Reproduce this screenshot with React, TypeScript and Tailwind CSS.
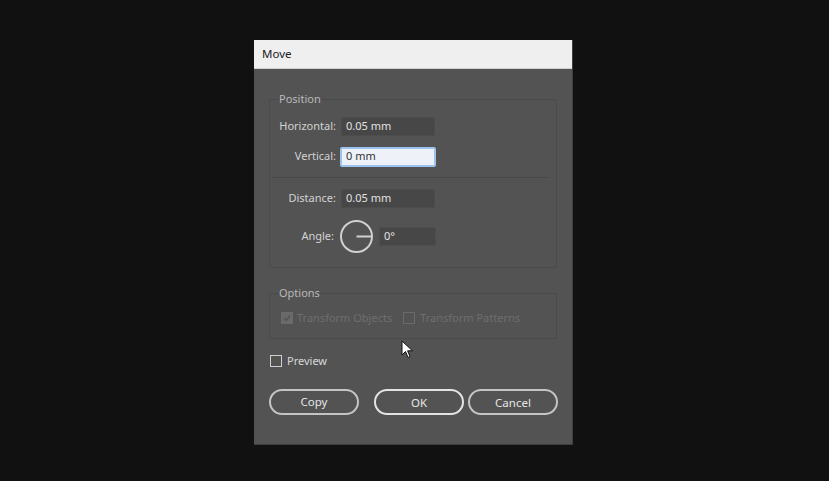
import React from "react";

const font = { fontFamily: '"Noto Sans", "Open Sans", Arial, sans-serif' };

const Field: React.FC<{ label: string; value: string; focused?: boolean }> = ({
  label,
  value,
  focused,
}) => (
  <div className="flex items-center h-[19px]">
    <span className="w-[68px] text-right text-[11px] text-[#d2d2d2] pr-[2px]">{label}</span>
    {focused ? (
      <div className="ml-[2px] w-[96px] h-[20px] bg-[#eef2f8] border-2 border-[#9cc2ee] rounded-[2px] flex items-center pl-[4px] text-[11px] text-[#333]">
        {value}
      </div>
    ) : (
      <div className="ml-[3px] w-[94px] h-[19px] bg-[#474747] border border-[#4d4d4d] rounded-[2px] flex items-center pl-[4px] text-[11px] text-[#e2e2e2]">
        {value}
      </div>
    )}
  </div>
);

const Box: React.FC<{ checked?: boolean; dim?: boolean }> = ({ checked, dim }) => (
  <span
    className={`w-[12px] h-[12px] border flex items-center justify-center ${
      dim ? "border-[#6a6a6a]" : "border-[#cfcfcf]"
    } ${checked ? "bg-[#6a6a6a]" : ""}`}>
    {checked && (
      <svg width="10" height="10" viewBox="0 0 10 10">
        <path d="M2 5 L4.2 7.5 L8 2.5" stroke="#545454" strokeWidth="1.6" fill="none" />
      </svg>
    )}
  </span>
);

const Pill: React.FC<{ label: string; primary?: boolean }> = ({ label, primary }) => (
  <button
    className={`shrink-0 w-[90px] h-[26px] rounded-full border-2 text-[11.5px] text-[#e6e6e6] ${
      primary ? "border-[#e4e4e4]" : "border-[#c4c4c4]"
    }`}>
    {label}
  </button>
);

export default function App() {
  return (
    <div className="w-[829px] h-[481px] bg-[#111111] pt-[40px] pl-[254px]" style={font}>
      <div className="relative w-[319px] h-[405px] bg-[#535353] border-r border-b border-[#3e3e3e]">
        {/* title bar */}
        <div className="h-[29px] bg-[#efefef] border-b border-[#d0d0d0] flex items-center pl-[8px] text-[11.5px] text-[#222]">
          Move
        </div>

        <div className="px-[15px] pt-[22px]">
          {/* Position */}
          <fieldset className="w-[288px] h-[177px] border border-[#4b4b4b] rounded-[2px]">
            <legend className="ml-[9px] text-[11px] text-[#b9b9b9] leading-[16px]">Position</legend>
            <div className="pt-[10px] flex flex-col gap-[11px]">
              <Field label="Horizontal:" value="0.05 mm" />
              <Field label="Vertical:" value="0 mm" focused />
            </div>
            <div className="ml-[2px] mt-[11px] w-[277px] h-px bg-[#474747]" />
            <div className="pt-[11px]">
              <Field label="Distance:" value="0.05 mm" />
            </div>
            <div className="flex items-center mt-[11px] h-[34px]">
              <span className="w-[67px] text-right text-[11px] text-[#d2d2d2] pr-[3px]">Angle:</span>
              <svg width="35" height="35" viewBox="0 0 35 35" className="ml-[2px]">
                <circle cx="17.5" cy="17.5" r="15.5" stroke="#d0d0d0" strokeWidth="2" fill="none" />
                <line x1="17.5" y1="17.5" x2="33" y2="17.5" stroke="#d0d0d0" strokeWidth="2" />
              </svg>
              <div className="ml-[5px] w-[57px] h-[19px] bg-[#474747] border border-[#4d4d4d] rounded-[2px] flex items-center pl-[4px] text-[11px] text-[#e2e2e2]">
                0°
              </div>
            </div>
          </fieldset>

          {/* Options */}
          <fieldset className="mt-[17px] w-[288px] h-[54px] border border-[#4b4b4b] rounded-[2px]">
            <legend className="ml-[9px] text-[11px] text-[#b9b9b9] leading-[16px]">Options</legend>
            <div className="flex items-center pl-[11px] pt-[9px] text-[11px] text-[#6e6e6e]">
              <Box checked dim />
              <span className="ml-[4px]">Transform Objects</span>
              <span className="ml-[11px]">
                <Box dim />
              </span>
              <span className="ml-[5px]">Transform Patterns</span>
            </div>
          </fieldset>

          {/* Preview */}
          <div className="flex items-center mt-[14px] pl-[1px] text-[11px] text-[#d8d8d8]">
            <Box />
            <span className="ml-[5px]">Preview</span>
          </div>

          {/* Buttons */}
          <div className="flex mt-[19px]">
            <Pill label="Copy" />
            <div className="ml-[15px]">
              <Pill label="OK" primary />
            </div>
            <div className="ml-[4px]">
              <Pill label="Cancel" />
            </div>
          </div>
        </div>

        {/* mouse pointer */}
        <svg
          width="14"
          height="20"
          viewBox="0 0 14 20"
          className="absolute left-[147px] top-[300px]">
          <path
            d="M1 1 L1 15 L4.5 11.5 L7 17.5 L9 16.6 L6.6 10.8 L11.5 10.8 Z"
            fill="#ffffff"
            stroke="#111"
            strokeWidth="1"
          />
        </svg>
      </div>
    </div>
  );
}
